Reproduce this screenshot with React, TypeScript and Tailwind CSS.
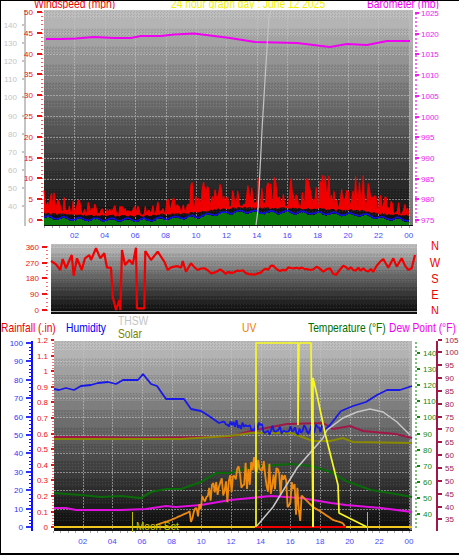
import React from "react";

const FONT = '"Liberation Sans", Arial, sans-serif';

function rng(seed: number) {
  let s = seed;
  return () => {
    s = (s * 1664525 + 1013904223) % 4294967296;
    return s / 4294967296;
  };
}

const pts = (a: number[][]) => a.map((p) => p.join(",")).join(" ");

function Backdrop({ id, x, y, w, h, bands }: { id: string; x: number; y: number; w: number; h: number; bands: number }) {
  const rects: React.ReactNode[] = [];
  const bh = h / bands;
  for (let i = 0; i < bands; i++) {
    const t = i / (bands - 1);
    const g = Math.round(172 * Math.pow(1 - t, 1.1) + 16);
    const c = `rgb(${g},${g},${g})`;
    const top = Math.round(y + i * bh);
    rects.push(<rect key={i} x={x} y={top} width={w} height={Math.ceil(bh) + 1} fill={c} />);
    if (i % 2 === 0) rects.push(<rect key={`d${i}`} x={x} y={top} width={w} height={Math.ceil(bh)} fill={`url(#${id})`} />);
  }
  return (
    <g shapeRendering="crispEdges">
      <defs>
        <pattern id={id} width="3" height="3" patternUnits="userSpaceOnUse">
          <rect x="0" y="0" width="1" height="1" fill="#000" opacity="0.1" />
          <rect x="2" y="1" width="1" height="1" fill="#fff" opacity="0.08" />
          <rect x="1" y="2" width="1" height="1" fill="#000" opacity="0.1" />
        </pattern>
      </defs>
      {rects}
    </g>
  );
}

function Ticks({ x, values, color, anchor, labelX, size = 4, fs = 8 }: { x: number; values: [string, number][]; color: string; anchor: "start" | "end"; labelX: number; size?: number; fs?: number }) {
  return (
    <g>
      {values.map(([t, y]) => (
        <g key={t}>
          <rect x={x} y={y - 1} width={size} height={2} fill={color} shapeRendering="crispEdges" />
          <text x={labelX} y={y + 3} textAnchor={anchor} fontSize={fs} fill={color} fontFamily={FONT}>
            {t}
          </text>
        </g>
      ))}
    </g>
  );
}

function Grid({ xs, ys, x0, x1, y0, y1 }: { xs: number[]; ys: number[]; x0: number; x1: number; y0: number; y1: number }) {
  return (
    <g stroke="#c4c4c4" strokeWidth="1" strokeDasharray="2 1" opacity="0.6" shapeRendering="crispEdges">
      {xs.map((x) => (
        <line key={`v${x}`} x1={x + 0.5} x2={x + 0.5} y1={y0} y2={y1} />
      ))}
      {ys.map((y) => (
        <line key={`h${y}`} x1={x0} x2={x1} y1={y + 0.5} y2={y + 0.5} />
      ))}
    </g>
  );
}

const HOURS = ["02", "04", "06", "08", "10", "12", "14", "16", "18", "20", "22", "00"];

function HourAxis({ base, step, y, tickY }: { base: number; step: number; y: number; tickY: number }) {
  const minor: number[] = [];
  for (let i = 0; i <= 24; i += 0.5) minor.push(base + i * step);
  return (
    <g>
      <g fill="#a8a8a8" shapeRendering="crispEdges">
        {minor.map((x) => (
          <rect key={x} x={x} y={tickY} width={1} height={2} />
        ))}
      </g>
      {HOURS.map((t, i) => (
        <text key={t} x={base + (i + 1) * 2 * step} y={y} textAnchor="middle" fontSize={8} fill="#4848ff" fontFamily={FONT}>
          {t}
        </text>
      ))}
    </g>
  );
}

function range(from: number, to: number, step: number) {
  const r: number[] = [];
  for (let v = from; step > 0 ? v <= to + 0.001 : v >= to - 0.001; v += step) r.push(v);
  return r;
}

function interp(table: number[][], h: number) {
  for (let i = 1; i < table.length; i++) {
    if (h <= table[i][0]) {
      const [a, b] = [table[i - 1], table[i]];
      return a[1] + ((b[1] - a[1]) * (h - a[0])) / (b[0] - a[0]);
    }
  }
  return table[table.length - 1][1];
}

function WindChart() {
  const r = rng(1234);
  const X = (h: number) => 43 + h * 15.2;
  const Y = (v: number) => 220 - v * 4.16;
  const peak = [[0, 10], [0.3, 8], [1, 7], [2, 5], [4, 3.5], [7, 3.5], [8, 5.5], [9, 5], [10, 11], [11, 8], [13, 10], [16, 10.5], [18, 11], [20, 10], [21, 11], [22, 6.5], [23, 5], [24, 3.5]];
  const avgEnv = [[0, 0.6], [2, 0.2], [4, 0], [7, 0], [8, 0.4], [10, 0.7], [11, 1.3], [13, 2], [14, 1.8], [16, 1.8], [18, 1.6], [20, 1.3], [21, 1.2], [22, 0.5], [24, 0]];
  const top: number[][] = [];
  const bottom: number[][] = [];
  const blue: number[][] = [];
  const green: number[][] = [];
  for (let i = 0; i <= 288; i++) {
    const h = i / 12;
    const x = +X(h).toFixed(1);
    const avg = interp(avgEnv, h);
    const gust = interp(peak, h) * (0.28 + 0.72 * Math.pow(r(), 1.5));
    const n = avg + 0.3 * Math.sin(i * 0.5) + r() * 0.2;
    top.push([x, +Y(Math.max(gust, avg + 1.2)).toFixed(1)]);
    bottom.push([x, +Y(avg + 0.8 + r() * 0.5).toFixed(1)]);
    blue.push([x, +Y(n).toFixed(1)]);
    green.push([x, +Y(Math.max(n - 0.3, -1)).toFixed(1)]);
  }
  const baro = [[45, 39], [60, 39], [75, 38.5], [93, 37], [113, 38], [130, 38], [140, 36], [160, 36], [173, 34.5], [193, 33.5], [213, 36], [229, 38], [254, 42], [296, 43], [329, 47], [346, 44], [366, 45], [386, 41], [409, 41]];
  const hg = range(33, 200, 20.8);
  return (
    <svg width="458" height="229" viewBox="0 9 458 229" className="block">
      <Backdrop id="d1" x={43} y={10} w={369} h={215} bands={24} />
      <Grid xs={range(1, 12, 1).map((i) => Math.round(X(i * 2)))} ys={hg.map(Math.round)} x0={43} x1={408} y0={10} y1={225} />
      <rect x={408} y={10} width={4} height={215} fill="#bbb" opacity="0.6" />
      <polygon points={pts([[X(0), 225], ...green, [X(24), 225]])} fill="#0a7a0a" shapeRendering="crispEdges" />
      <polygon points={pts([...top, ...bottom.slice().reverse()])} fill="#f00000" />
      <polyline points={pts(top)} fill="none" stroke="#f00000" strokeWidth="1.2" strokeLinejoin="bevel" />
      <polyline points={pts(blue)} fill="none" stroke="#1010e0" strokeWidth="1.6" />
      <polyline points={pts(baro)} fill="none" stroke="#f000f0" strokeWidth="2" />
      <polyline points="255,225 257,210 261,130 264,80 268,17 270,10" fill="none" stroke="#c4c4c4" strokeWidth="1.2" />
      <rect x={23} y={10} width={2} height={216} fill="#c4c4c4" />
      <Ticks x={21} values={range(140, 40, -10).map((v, i) => [String(v), 25 + i * 18.1] as [string, number])} color="#c4c4c4" anchor="end" labelX={16} size={2} />
      <g fill="#f06060" shapeRendering="crispEdges">
        {range(12, 222, 4.16).map((y) => (
          <rect key={y} x={40} y={y} width={2} height={1} />
        ))}
      </g>
      <Ticks x={36} values={range(50, 0, -5).map((v) => [String(v), Y(v)] as [string, number])} color="#f01010" anchor="end" labelX={32} size={5} />
      <g fill="#f070f0" shapeRendering="crispEdges">
        {range(13, 222, 4.15).map((y) => (
          <rect key={y} x={414} y={y} width={2} height={2} />
        ))}
      </g>
      <Ticks x={414} values={range(1025, 975, -5).map((v, i) => [String(v), 13 + i * 20.7] as [string, number])} color="#f020f0" anchor="start" labelX={420} size={4} />
      <HourAxis base={43} step={15.2} y={238} tickY={226} />
    </svg>
  );
}

function DirChart() {
  const X = (zx: number) => zx / 3;
  const Y = (zy: number) => 235 + zy / 3;
  const a = [[150, 78], [165, 88], [178, 105], [185, 72], [195, 100], [212, 60], [218, 122], [228, 70], [242, 105], [252, 70], [265, 60], [270, 75], [285, 40], [298, 70], [310, 55], [318, 98], [330, 98], [335, 185], [345, 225], [355, 195], [358, 225], [363, 45], [372, 90], [385, 75], [395, 88], [405, 38], [408, 220], [430, 220], [433, 48], [450, 75], [470, 50], [490, 80], [500, 105], [520, 95], [540, 98], [545, 78], [555, 110], [570, 85], [590, 105], [610, 100], [630, 115], [650, 108], [690, 115]];
  const b = [[0, 112], [30, 108], [65, 118], [100, 105], [130, 92], [150, 108], [200, 98], [240, 105], [260, 95], [280, 110], [300, 100], [318, 120], [340, 92], [370, 105], [400, 100], [430, 110], [440, 92], [460, 72], [475, 98], [490, 70], [500, 95], [515, 70], [535, 105], [545, 100], [555, 60]];
  const base = [...a.map(([x, y]) => [X(x), Y(y)]), ...b.map(([x, y]) => [229 + X(x), Y(y)])];
  const r = rng(99);
  const line: number[][] = [];
  base.forEach((p, i) => {
    line.push([+p[0].toFixed(1), +p[1].toFixed(1)]);
    const n = base[i + 1];
    if (n && n[0] - p[0] > 5 && p[0] > 160) {
      const steps = Math.floor((n[0] - p[0]) / 2.5);
      for (let k = 1; k < steps; k++) {
        const f = k / steps;
        line.push([+(p[0] + (n[0] - p[0]) * f).toFixed(1), +(p[1] + (n[1] - p[1]) * f + (r() - 0.5) * 4).toFixed(1)]);
      }
    }
  });
  const labels: [string, number][] = [["360", 247], ["270", 263], ["180", 278], ["90", 294], ["0", 310]];
  const dirs: [string, number][] = [["N", 245], ["W", 262], ["S", 278], ["E", 294], ["N", 310]];
  return (
    <svg width="458" height="76" viewBox="0 238 458 76" className="block">
      <Backdrop id="d2" x={50} y={244} w={366} h={69} bands={16} />
      <rect x={50} y={311} width={366} height={1} fill="#a8a8a8" />
      <g fill="#f07070" shapeRendering="crispEdges">
        {range(246, 311, 4).map((y) => (
          <rect key={y} x={45} y={y} width={2} height={1} />
        ))}
      </g>
      <Ticks x={41} values={labels} color="#f01010" anchor="end" labelX={38} size={5} />
      <polyline points={pts(line)} fill="none" stroke="#f00000" strokeWidth="2.2" strokeLinejoin="bevel" />
      {dirs.map(([t, y], i) => (
        <text key={i} x={434} y={y + 5} textAnchor="middle" fontSize={13} fill="#f00000" fontFamily={FONT} transform={`translate(${434 * 0.15} 0) scale(0.85 1)`}>
          {t}
        </text>
      ))}
    </svg>
  );
}

function ComboChart() {
  const r = rng(77);
  const X = (h: number) => 52 + h * 14.83;
  const humidity: number[][] = [[53, 389], [58, 390], [65, 388], [73, 390], [80, 386], [90, 385], [97, 383], [107, 382], [115, 384], [122, 380], [137, 380], [142, 374], [150, 384], [156, 386], [165, 399], [183, 399], [190, 409], [200, 411], [208, 416], [218, 423]];
  for (let x = 222; x < 325; x += 1.5) {
    const base = x < 262 ? 424 + (x - 222) * 0.09 : x < 300 ? 430 : 430 - (x - 300) * 0.12;
    humidity.push([x, +(base + (r() - 0.5) * 10).toFixed(1)]);
  }
  humidity.push([329, 425], [340, 411], [352, 406], [365, 402], [376, 395], [386, 390], [399, 390], [411, 386]);

  const env = [[155, 525], [170, 520], [188, 512], [200, 497], [215, 480], [232, 470], [252, 456], [260, 460], [272, 465], [285, 476], [295, 485], [300, 495], [312, 507], [322, 513], [332, 520], [342, 523], [344, 527]];
  const orange: number[][] = [];
  for (let x = 155; x <= 344; x += 1.4) {
    const dip = x > 190 && x < 300 ? Math.pow(r(), 2) * (x > 225 ? 32 : 20) : 0;
    orange.push([+x.toFixed(1), +(interp(env, x) + dip).toFixed(1)]);
  }
  const magenta = [[53, 508], [65, 508], [75, 510], [120, 510], [145, 509], [165, 506], [175, 507], [200, 505], [229, 500], [250, 498], [270, 496], [300, 498], [330, 503], [345, 505], [380, 508], [411, 512]];
  const green = [[53, 493], [80, 495], [100, 497], [120, 496], [140, 498], [150, 492], [160, 490], [165, 489], [180, 489], [200, 482], [215, 473], [229, 473], [250, 467], [275, 465], [290, 464], [310, 466], [330, 472], [345, 481], [370, 490], [395, 494], [411, 497]];
  const olive = [[53, 439], [180, 439], [229, 436], [250, 433], [290, 433], [312, 441], [329, 441], [342, 438], [352, 442], [411, 443]];
  const maroon = [[53, 437], [90, 437], [140, 438], [205, 437], [229, 437], [249, 431], [286, 424], [322, 423], [332, 429], [349, 426], [362, 431], [395, 434], [411, 438]];
  const gray = [[255, 527], [272, 507], [296, 468], [322, 438], [326, 430], [342, 418], [356, 412], [369, 409], [382, 412], [396, 422], [409, 435]];
  const yellow = [[255, 527], [255, 343], [297, 343], [297, 425], [298, 343], [310, 343], [312, 527], [312, 378], [316, 395], [324, 433], [337, 485], [338, 513], [366, 527]];

  const blueLabels = range(100, 0, -10).map((v, i) => [String(v), 343 + i * 18.4] as [string, number]);
  const rainLabels: [string, number][] = ["1.2", "1.1", "1", "0.9", "0.8", "0.7", "0.6", "0.5", "0.4", "0.3", "0.2", "0.1", "0"].map((t, i) => [t, 340 + i * 15.6]);
  const tempLabels = range(140, 40, -10).map((v, i) => [String(v), 353 + i * 16.1] as [string, number]);
  const dewLabels = range(105, 35, -5).map((v, i) => [String(v), 339.5 + i * 12.85] as [string, number]);

  return (
    <svg width="458" height="215" viewBox="0 338 458 215" className="block">
      <Backdrop id="d3" x={53} y={341} w={358} h={189} bands={22} />
      <Grid xs={range(1, 12, 1).map((i) => Math.round(X(i * 2)))} ys={blueLabels.slice(1, -1).map(([, y]) => Math.round(y))} x0={53} x1={408} y0={341} y1={530} />
      <rect x={409} y={341} width={2} height={189} fill="#bbb" opacity="0.6" />
      <rect x={30} y={341} width={2} height={190} fill="#1010ff" />
      <g fill="#1010ff" shapeRendering="crispEdges">
        {range(343, 527, 3.68).map((y) => (
          <rect key={y} x={28} y={y} width={2} height={1} />
        ))}
      </g>
      <Ticks x={25} values={blueLabels} color="#3030ff" anchor="end" labelX={22} size={5} />
      <g fill="#f07070" shapeRendering="crispEdges">
        {range(340, 527, 3.12).map((y) => (
          <rect key={y} x={51} y={y} width={2} height={1} />
        ))}
      </g>
      <Ticks x={50} values={rainLabels} color="#f01010" anchor="end" labelX={47} size={3} />
      <polyline points={pts(maroon)} fill="none" stroke="#a01848" strokeWidth="2" />
      <polyline points={pts(olive)} fill="none" stroke="#8a8a00" strokeWidth="2" />
      <polyline points={pts(green)} fill="none" stroke="#0a6a0a" strokeWidth="2.2" />
      <polyline points={pts(magenta)} fill="none" stroke="#e010e0" strokeWidth="2.2" />
      <polyline points={pts(humidity)} fill="none" stroke="#1818e8" strokeWidth="1.8" strokeLinejoin="bevel" />
      <polyline points={pts(orange)} fill="none" stroke="#ee8a10" strokeWidth="1.8" strokeLinejoin="bevel" />
      <polyline points={pts(gray)} fill="none" stroke="#c8c8c8" strokeWidth="1.5" />
      <rect x={53} y={526} width={358} height={2} fill="#f0c820" />
      <rect x={254} y={526} width={91} height={2} fill="#f00000" />
      <polyline points={pts(yellow)} fill="none" stroke="#f8f820" strokeWidth="1.7" strokeLinejoin="bevel" />
      <rect x={311} y={420} width={2} height={107} fill="#f8f820" />
      <rect x={131} y={512} width={1} height={20} fill="#c0c000" />
      <rect x={366} y={512} width={1} height={19} fill="#c0c000" />
      <text x={135} y={530} fontSize={10} fill="#c4c400" fontFamily={FONT}>
        Moon Set
      </text>
      <g fill="#7cc07c" shapeRendering="crispEdges">
        {range(342, 528, 4).map((y) => (
          <rect key={y} x={414} y={y} width={2} height={2} />
        ))}
      </g>
      <Ticks x={416} values={tempLabels} color="#128a12" anchor="start" labelX={422} size={3} />
      <rect x={435} y={341} width={2} height={190} fill="#a01848" />
      <Ticks x={437} values={dewLabels} color="#a01848" anchor="start" labelX={444} size={4} />
      <HourAxis base={52} step={14.83} y={544} tickY={531} />
    </svg>
  );
}

function Label({ children, className }: { children: React.ReactNode; className: string }) {
  return <span className={`block origin-left scale-x-[0.79] whitespace-nowrap text-[13px] leading-[13px] ${className}`}>{children}</span>;
}

export default function App() {
  return (
    <div className="h-[555px] w-[459px] overflow-hidden border-b-2 border-l border-t border-black bg-white" style={{ fontFamily: FONT }}>
      <div className="grid h-2 grid-cols-[137px_196px_1fr] overflow-hidden pl-[33px]">
        <div className="-mt-1"><Label className="text-[#f00000]">Windspeed (mph)</Label></div>
        <div className="-mt-1"><Label className="text-[#f0f000]">24 hour graph day : June 12 2025</Label></div>
        <div className="-mt-1"><Label className="text-[#f000f0]">Barometer (mb)</Label></div>
      </div>
      <WindChart />
      <DirChart />
      <div className="grid h-[24px] grid-cols-[65px_52px_124px_66px_81px_1fr] items-center">
        <Label className="text-[#f00000]">Rainfall (.in)</Label>
        <Label className="text-[#0000f0]">Humidity</Label>
        <div className="flex flex-col">
          <Label className="text-[#c4c4c4]">THSW</Label>
          <Label className="text-[#808000]">Solar</Label>
        </div>
        <Label className="text-[#f08000]">UV</Label>
        <Label className="text-[#006e00]">Temperature (°F)</Label>
        <Label className="text-[#f000f0]">Dew Point (°F)</Label>
      </div>
      <ComboChart />
    </div>
  );
}
